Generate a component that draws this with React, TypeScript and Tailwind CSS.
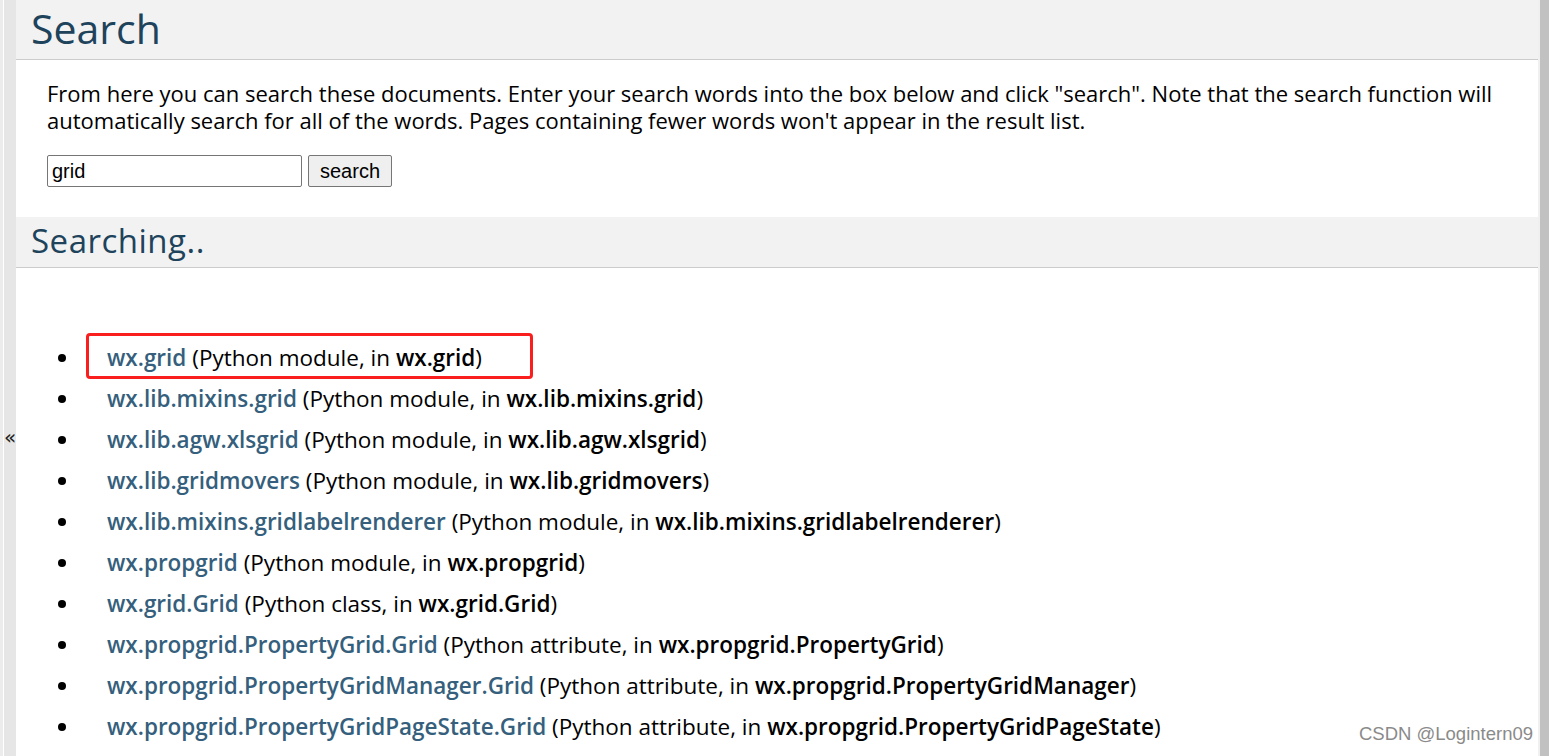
const results = [
  { name: 'wx.grid', kind: 'Python module', parent: 'wx.grid' },
  { name: 'wx.lib.mixins.grid', kind: 'Python module', parent: 'wx.lib.mixins.grid' },
  { name: 'wx.lib.agw.xlsgrid', kind: 'Python module', parent: 'wx.lib.agw.xlsgrid' },
  { name: 'wx.lib.gridmovers', kind: 'Python module', parent: 'wx.lib.gridmovers' },
  { name: 'wx.lib.mixins.gridlabelrenderer', kind: 'Python module', parent: 'wx.lib.mixins.gridlabelrenderer' },
  { name: 'wx.propgrid', kind: 'Python module', parent: 'wx.propgrid' },
  { name: 'wx.grid.Grid', kind: 'Python class', parent: 'wx.grid.Grid' },
  { name: 'wx.propgrid.PropertyGrid.Grid', kind: 'Python attribute', parent: 'wx.propgrid.PropertyGrid' },
  { name: 'wx.propgrid.PropertyGridManager.Grid', kind: 'Python attribute', parent: 'wx.propgrid.PropertyGridManager' },
  { name: 'wx.propgrid.PropertyGridPageState.Grid', kind: 'Python attribute', parent: 'wx.propgrid.PropertyGridPageState' },
];

export default function App() {
  return (
    <div className="flex h-[756px] w-full overflow-hidden bg-white font-['Open_Sans','Noto_Sans',sans-serif] text-black">
      {/* collapsed sidebar */}
      <div className="w-[3px] bg-[#ececec]" />
      <div className="w-[1px] bg-white" />
      <div className="w-[12px] bg-[#e6e6e6] pt-[426px] text-center">
        <span className="font-['DejaVu_Sans',sans-serif] text-[20px] leading-none text-[#222]">«</span>
      </div>

      {/* document body */}
      <div className="relative flex-1 overflow-hidden bg-white">
        <h1 className="h-[60px] border-b border-[#cccccc] bg-[#f2f2f2] pl-[15px] text-[41px] leading-[57px] text-[#20435c]">
          Search
        </h1>

        <div className="px-[31px] pt-[20px]">
          <p className="text-[22px] leading-[27px]">
            From here you can search these documents. Enter your search words into the box below and click "search". Note that the search function will automatically search for all of the words. Pages containing fewer words won't appear in the result list.
          </p>

          <form className="mt-[21px] flex gap-[6px]" onSubmit={(e) => e.preventDefault()}>
            <input
              defaultValue="grid"
              className="h-[32px] w-[255px] rounded-[2px] border border-[#767676] px-[4px] font-['Liberation_Sans',Arial,sans-serif] text-[20px] outline-none"
            />
            <button
              type="submit"
              className="h-[32px] w-[84px] rounded-[2px] border border-[#767676] bg-[#efefef] font-['Liberation_Sans',Arial,sans-serif] text-[20px]"
            >
              search
            </button>
          </form>
        </div>

        <h2 className="mt-[30px] h-[51px] border-b border-[#cccccc] bg-[#f2f2f2] pl-[15px] text-[33px] leading-[48px] tracking-[0.5px] text-[#20435c]">
          Searching..
        </h2>

        <ul className="mt-[69px] text-[22.5px] leading-[41px]">
          {results.map((r) => (
            <li key={r.name} className="flex items-center">
              <span className="ml-[42px] mr-[41px] h-[8px] w-[8px] shrink-0 rounded-full bg-black" />
              <span>
                <a href="#" className="font-semibold text-[#355f7c]">{r.name}</a>{' '}
                ({r.kind}, in <strong className="font-semibold">{r.parent}</strong>)
              </span>
            </li>
          ))}
        </ul>

        {/* annotation box */}
        <div className="absolute left-[70px] top-[333px] h-[46px] w-[447px] rounded-[4px] border-[3px] border-[#fa1e1e]" />

        <span className="absolute bottom-[8px] right-[5px] font-['Liberation_Sans',Arial,sans-serif] text-[18.5px] text-[#8a8a8a]">
          CSDN @Logintern09
        </span>
      </div>

      {/* scrollbar */}
      <div className="w-[2px] bg-[#f0f0f0]" />
      <div className="w-[9px] bg-[#c1c1c1]" />
    </div>
  );
}
